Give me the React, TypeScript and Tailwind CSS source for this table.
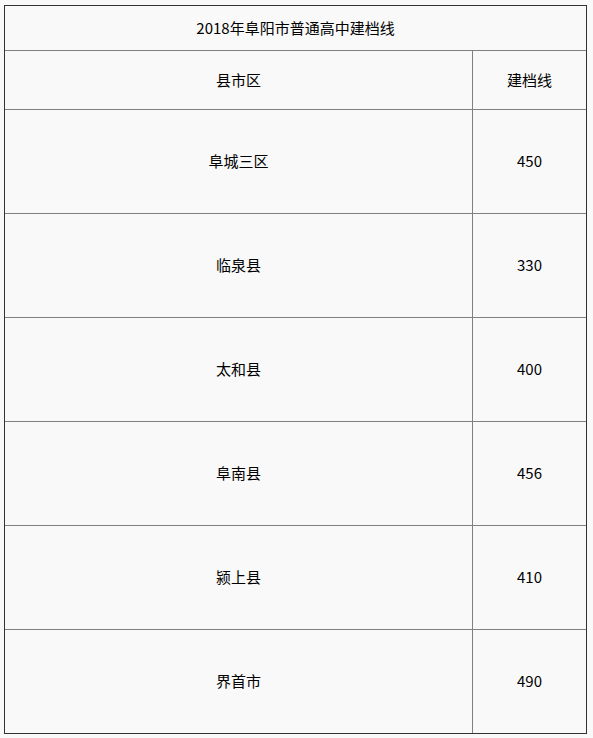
const rows: [string, string][] = [
  ["阜城三区", "450"],
  ["临泉县", "330"],
  ["太和县", "400"],
  ["阜南县", "456"],
  ["颍上县", "410"],
  ["界首市", "490"],
];

export default function App() {
  return (
    <div className="min-h-[738px] bg-[#f9f9f9] pt-[5px] pl-[4px] font-['Microsoft_YaHei','Noto_Sans_CJK_SC',sans-serif] text-[15px] text-black">
      <div className="w-[583px] border border-[#333333]">
        {/* 标题 */}
        <div className="flex h-[45px] items-center justify-center border-b border-[#808080]">
          2018年阜阳市普通高中建档线
        </div>
        <div className="flex h-[59px] border-b border-[#808080]">
          <div className="flex w-[468px] items-center justify-center border-r border-[#808080]">
            县市区
          </div>
          <div className="flex flex-1 items-center justify-center">建档线</div>
        </div>
        {rows.map(([name, score], i) => (
          <div
            key={name}
            className={
              i === rows.length - 1
                ? "flex h-[103px]"
                : "flex h-[104px] border-b border-[#808080]"
            }
          >
            <div className="flex w-[468px] items-center justify-center border-r border-[#808080]">
              {name}
            </div>
            <div className="flex flex-1 items-center justify-center">{score}</div>
          </div>
        ))}
      </div>
    </div>
  );
}
